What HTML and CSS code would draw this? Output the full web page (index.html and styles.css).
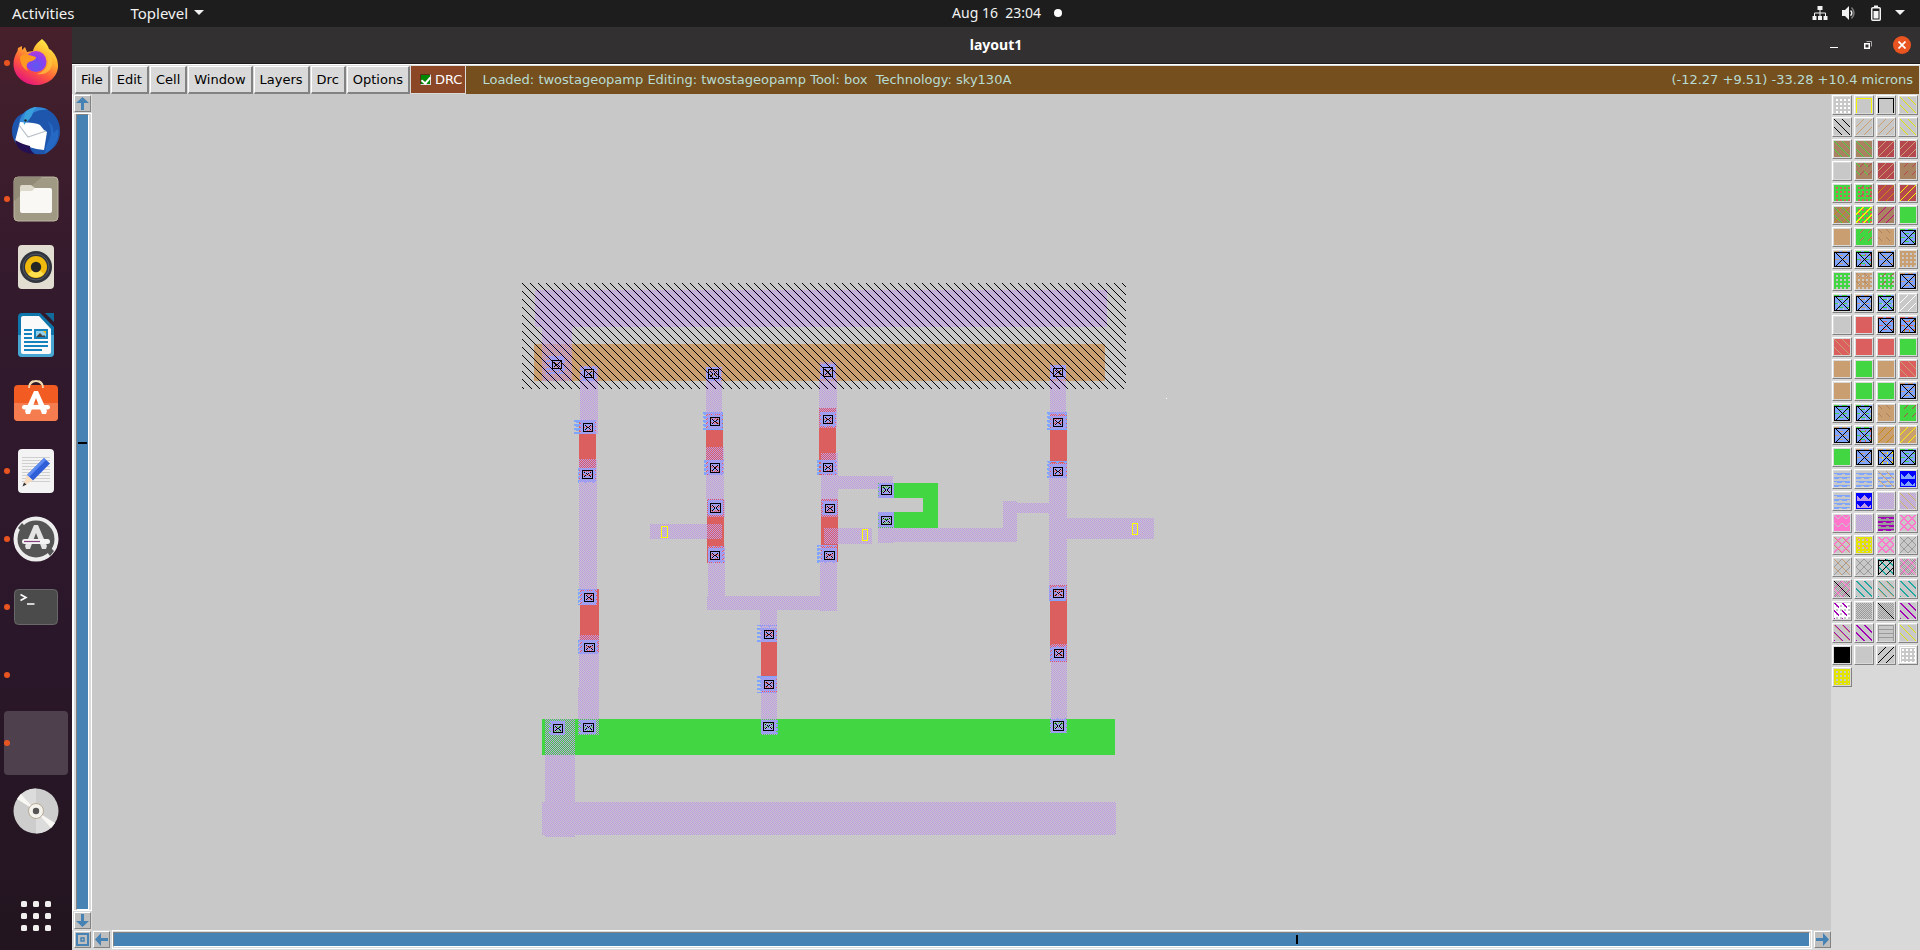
FILE: index.html
```html
<!DOCTYPE html>
<html lang="en">
<head>
<meta charset="utf-8">
<title>layout1</title>
<link rel="stylesheet" href="styles.css">
</head>
<body>
<header class="topbar">
  <div class="topbar-left">
    <button class="top-item" type="button">Activities</button>
    <button class="top-item app-menu" type="button">Toplevel
      <svg width="10" height="5" viewBox="0 0 10 5" aria-hidden="true"><path d="M0 0h10L5 5z" fill="#f2f2f2"/></svg>
    </button>
  </div>
  <button class="top-item clock" type="button"><span>Aug 16&nbsp; 23:04</span><span class="clock-dot"></span></button>
  <button class="top-item tray" type="button" aria-label="System menu">
    <svg width="16" height="16" viewBox="0 0 16 16" aria-hidden="true"><path d="M5.500 1h5v4h-5zM.5 11h4v4h-4zM6 11h4v4H6zM11.500 11h4v4h-4z" fill="#f2f2f2"/><path d="M8 5v6M2.500 11V8h11v3" fill="none" stroke="#f2f2f2"/></svg>
    <svg width="16" height="16" viewBox="0 0 16 16" aria-hidden="true"><path d="M1 5h3l4-4v14l-4-4H1z" fill="#f2f2f2"/><path d="M9.500 5.500a3 3 0 0 1 0 5" fill="none" stroke="#f2f2f2" stroke-width="1.500"/><path d="M10.500 2.500q5 5.500 0 11" fill="none" stroke="#777" stroke-width="1.500"/></svg>
    <svg width="12" height="16" viewBox="0 0 12 16" aria-hidden="true"><path d="M4 .5h4V3H4z" fill="#f2f2f2"/><rect x="1.750" y="2.750" width="8.500" height="12.500" rx="1" fill="none" stroke="#f2f2f2" stroke-width="1.500"/><path d="M3.500 6h5v7.500h-5z" fill="#f2f2f2"/></svg>
    <svg width="10" height="5" viewBox="0 0 10 5" aria-hidden="true"><path d="M0 0h10L5 5z" fill="#f2f2f2"/></svg>
  </button>
</header>

<div class="desktop">
  <nav class="dock" aria-label="Dock">
    <button class="dock-item running" type="button" aria-label="Firefox">
      <svg width="48" height="48" viewBox="0 0 48 48" aria-hidden="true">
        <defs>
          <linearGradient id="ffBody" x1=".85" y1=".05" x2=".3" y2="1"><stop offset="0" stop-color="#fff04a"/><stop offset=".35" stop-color="#ffb02e"/><stop offset=".65" stop-color="#ff5a3c"/><stop offset="1" stop-color="#e3127f"/></linearGradient>
          <radialGradient id="ffGlobe" cx=".5" cy=".7" r=".7"><stop offset="0" stop-color="#5a5af0"/><stop offset=".6" stop-color="#8a3ff0"/><stop offset="1" stop-color="#b63ad8"/></radialGradient>
        </defs>
        <path d="M30 0c4 3 6 7 7 10l2 1c5 5 7 10 7 16 0 11-10 19-22 19S1.500 37 1.500 25c0-5 1.500-9 4-13L6 9l4-2v4l3-3 2 5 6-1c1-5 5-9 9-12z" fill="url(#ffBody)"/>
        <circle cx="24" cy="22.500" r="10.500" fill="url(#ffGlobe)"/>
        <path d="M8 18c2-3 6-3 9-2l7 2c0 3-4 4-7 5-3 2-3 6-1 9-5-2-8-8-8-14z" fill="#ff9820"/>
        <path d="M33 12c6 8 3 20-8 23 9 2 17-5 15-15-1-4-3-7-7-8z" fill="#ffc43b" opacity=".75"/>
      </svg>
    </button>
    <button class="dock-item" type="button" aria-label="Thunderbird">
      <svg width="48" height="48" viewBox="0 0 48 48" aria-hidden="true">
        <path d="M12 6C18-1 30-1 36 3c8 4 12 12 12 21 0 10-5 18-13 21l-2 2c-7 1-16 0-21-4C4 39 0 32 0 24 0 15 5 8 12 6z" fill="#1f56ad"/>
        <path d="M12 6C18-1 30-1 36 3c-9-1-16 2-18 7l-9 14c-3-6-2-13 3-18z" fill="#3289d8"/>
        <path d="M8 15c6 1 15 0 20 3l4 5 3 2-3 18c-10-1-20-4-29-9z" fill="#fff"/>
        <path d="M7 18l9 12 18-6" fill="none" stroke="#b9bfc8" stroke-width="1.200"/>
        <path d="M14 5c3-3 7-5 11-5l-4 4c0 6-6 10-9 14-1-4 0-9 2-13z" fill="#3aa0dc"/>
        <path d="M36 15c5 8 3 16-2 24l-1 8c9-5 15-15 13-25l-5 4c1-5-1-9-5-11z" fill="#2569c4"/>
        <path d="M3 33c5 3 10 5 15 6 0 4 2 6 5 8C12 47 5 42 3 33z" fill="#241052"/>
        <circle cx="13.500" cy="13.500" r="1.200" fill="#222"/>
      </svg>
    </button>
    <button class="dock-item running" type="button" aria-label="Files">
      <svg width="48" height="48" viewBox="0 0 48 48" aria-hidden="true"><rect x="2" y="2" width="44" height="44" rx="4" fill="#a09a84" stroke="#bdb7a2"/><path d="M2 26L30 2h-24q-4 0-4 4z" fill="#918a76"/><path d="M8 12q0-2 2-2h9l4 3v8H8z" fill="#dedacb"/><path d="M8 18q0-2 2-2h10l3-3h15q2 0 2 2v21q0 2-2 2H10q-2 0-2-2z" fill="#f9f8f5"/></svg>
    </button>
    <button class="dock-item" type="button" aria-label="Rhythmbox">
      <svg width="48" height="48" viewBox="0 0 48 48" aria-hidden="true"><rect x="6" y="2" width="36" height="44" rx="4" fill="#e2ddd1"/><circle cx="24" cy="24" r="16" fill="#30343c"/><circle cx="24" cy="24" r="13" fill="none" stroke="#555a66"/><circle cx="24" cy="24" r="11" fill="#efb90d"/><path d="M16 31a11 11 0 0 0 16 0l-8-7z" fill="#ffe04d"/><circle cx="24" cy="24" r="5.200" fill="#252525"/></svg>
    </button>
    <button class="dock-item" type="button" aria-label="LibreOffice Writer">
      <svg width="48" height="48" viewBox="0 0 48 48" aria-hidden="true"><path d="M10 2h18l14 14v26q0 4-4 4H10q-4 0-4-4V6q0-4 4-4z" fill="#0f76ac"/><path d="M6 24h36v18q0 4-4 4H10q-4 0-4-4z" fill="#48a7d2"/><path d="M11 5h16l12 13v23q0 2-2 2H11q-2 0-2-2V7q0-2 2-2z" fill="#fafafa"/><path d="M33 2h9v9z" fill="#126a9a"/><path d="M12 19h8M12 23h8M12 27h8M12 31h24M12 35h24M12 39h18" stroke="#1382bd" stroke-width="2"/><rect x="22" y="18" width="14" height="10" fill="#1382bd"/><path d="M24 20h10v6H24z" fill="#8fd1ed"/><path d="M24 26l4-4 3 3 1-1 2 2z" fill="#444"/><path d="M31 20h3v3z" fill="#f1b71a"/></svg>
    </button>
    <button class="dock-item" type="button" aria-label="Ubuntu Software">
      <svg width="48" height="48" viewBox="0 0 48 48" aria-hidden="true"><path d="M17 9a7 7 0 0 1 14 0" fill="none" stroke="#f3dbb0" stroke-width="1.800"/><rect x="2" y="6" width="44" height="36" rx="4" fill="#f25c22"/><path d="M2 24h44v14q0 4-4 4H6q-4 0-4-4z" fill="#f47c4e"/><path d="M17 9q0-5 4-7M31 9q0-5-4-7" fill="none" stroke="#f3dbb0" stroke-width="1.800"/><path d="M22 12h4l9 20-1 3h-4l-6-16-6 16h-4l-1-3z" fill="#fff"/><rect x="10" y="26" width="28" height="4.500" rx="2.200" fill="#fff"/></svg>
    </button>
    <button class="dock-item running" type="button" aria-label="Text Editor">
      <svg width="48" height="48" viewBox="0 0 48 48" aria-hidden="true"><rect x="6" y="2" width="36" height="44" rx="4" fill="#f3f3f3"/><path d="M10 10.500h28M10 13.500h28M10 16.500h28M10 19.500h28M10 22.500h28M10 25.500h28M10 28.500h28M10 31.500h28M10 34.500h28" stroke="#cfcfcf"/><path d="M32 11l6 5.500-17 17-6-5.500z" fill="#2f5fd8"/><path d="M32 11l2 2-17 17-2-2z" fill="#5c8af0"/><path d="M15 28l6 5.500-10 5.500z" fill="#f8dcc0"/><path d="M12 35.500l2.500 2L10.500 39.500z" fill="#333"/></svg>
    </button>
    <button class="dock-item running" type="button" aria-label="Software Updater">
      <svg width="48" height="48" viewBox="0 0 48 48" aria-hidden="true"><circle cx="24" cy="24" r="20.500" fill="#555" stroke="#ededed" stroke-width="4"/><path d="M6 13l4-5 3 3-4 5zM35 37l4-4 3 3-4 5z" fill="#555"/><path d="M22 10h4l9 21-1 3h-4l-6-16-6 16h-4l-1-3z" fill="#e4e4e4"/><rect x="10" y="24" width="28" height="5" rx="2.500" fill="#f3f3f3"/><path d="M12 26.500h16" stroke="#87407f" stroke-width="1.200"/></svg>
    </button>
    <button class="dock-item running" type="button" aria-label="Terminal">
      <svg width="48" height="48" viewBox="0 0 48 48" aria-hidden="true"><rect x="2.500" y="6.500" width="43" height="35" rx="4" fill="#4b4b4b" stroke="#686868"/><path d="M8.500 11.500l5.500 3-5.500 3M15 21h7.500" fill="none" stroke="#fff" stroke-width="1.600"/></svg>
    </button>
    <button class="dock-item running" type="button" aria-label="Console window"></button>
    <button class="dock-item running active" type="button" aria-label="Layout window"></button>
    <button class="dock-item" type="button" aria-label="Disc">
      <svg width="48" height="48" viewBox="0 0 48 48" aria-hidden="true"><circle cx="24" cy="24" r="22.500" fill="#cdcdcd"/><path d="M24 24V1.500A22.500 22.500 0 0 0 6 10.500z" fill="#dcdcdc"/><path d="M24 24V46.500A22.500 22.500 0 0 0 42 37.500z" fill="#dcdcdc"/><path d="M24 24L5 12l4-5zM24 24l19 12-4 5z" fill="#f8f7f4"/><circle cx="24" cy="24" r="7.500" fill="#f5f3ee" stroke="#b5ab96"/><circle cx="24" cy="24" r="3.200" fill="#555"/></svg>
    </button>
    <button class="dock-item apps" type="button" aria-label="Show Applications">
      <svg width="30" height="30" viewBox="0 0 30 30" fill="#f2f0ee" aria-hidden="true"><rect width="6" height="6" rx="1.500"/><rect x="12" width="6" height="6" rx="1.500"/><rect x="24" width="6" height="6" rx="1.500"/><rect y="12" width="6" height="6" rx="1.500"/><rect x="12" y="12" width="6" height="6" rx="1.500"/><rect x="24" y="12" width="6" height="6" rx="1.500"/><rect y="24" width="6" height="6" rx="1.500"/><rect x="12" y="24" width="6" height="6" rx="1.500"/><rect x="24" y="24" width="6" height="6" rx="1.500"/></svg>
    </button>
  </nav>

  <main class="window">
    <div class="titlebar">
      <h1 class="title">layout1</h1>
      <div class="window-controls">
        <button type="button" aria-label="Minimize"><svg width="8" height="8" viewBox="0 0 8 8"><path d="M0 6.500h8" stroke="#fff"/></svg></button>
        <button type="button" aria-label="Restore"><svg width="8" height="8" viewBox="0 0 8 8"><path d="M.75 2.750h4.500v4.500H.75z" fill="none" stroke="#fff" stroke-width="1.500"/><path d="M2.500.5h5v5" fill="none" stroke="#aaa"/></svg></button>
        <button type="button" class="close" aria-label="Close"><svg width="8" height="8" viewBox="0 0 8 8"><path d="M.5.5l7 7M7.500.5l-7 7" stroke="#fff" stroke-width="1.700"/></svg></button>
      </div>
    </div>

    <div class="menubar">
      <button class="menu-button" type="button">File</button>
      <button class="menu-button" type="button">Edit</button>
      <button class="menu-button" type="button">Cell</button>
      <button class="menu-button" type="button">Window</button>
      <button class="menu-button" type="button">Layers</button>
      <button class="menu-button" type="button">Drc</button>
      <button class="menu-button" type="button">Options</button>
      <label class="drc"><input type="checkbox" checked>DRC</label>
      <div class="status"><span>Loaded: twostageopamp Editing: twostageopamp Tool: box&nbsp; Technology: sky130A</span><span>(-12.27 +9.51) -33.28 +10.4 microns</span></div>
    </div>

    <div class="workspace">
      <div class="vscroll">
        <button class="arrow" type="button" aria-label="Scroll up"><svg width="13" height="13" viewBox="0 0 13 13"><path d="M6.500 0L13 6H8v7H5V6H0z" fill="#4682b4"/></svg></button>
        <div class="trough"><div class="thumb"><span class="mark"></span></div></div>
        <button class="arrow" type="button" aria-label="Scroll down"><svg width="13" height="13" viewBox="0 0 13 13"><path d="M6.500 13L0 7h5V0h3v7h5z" fill="#4682b4"/></svg></button>
      </div>
      <div class="canvas">
        <svg class="layout" id="layout" role="img" aria-label="Two stage op-amp layout" shape-rendering="crispEdges"></svg>
      </div>
      <div class="hscroll">
        <button class="arrow" type="button" aria-label="Zoom to fit"><svg width="13" height="13" viewBox="0 0 13 13"><path d="M1 1h11v11H1z" fill="none" stroke="#4682b4" stroke-width="2"/><path d="M5 5h3v3H5z" fill="#bebebe" stroke="#4682b4" stroke-width="1.500"/></svg></button>
        <button class="arrow" type="button" aria-label="Scroll left"><svg width="13" height="13" viewBox="0 0 13 13"><path d="M0 6.500L6 0v5h7v3H6v5z" fill="#4682b4"/></svg></button>
        <div class="trough"><div class="thumb"><span class="mark"></span></div></div>
        <button class="arrow" type="button" aria-label="Scroll right"><svg width="13" height="13" viewBox="0 0 13 13"><path d="M13 6.500L7 13V8H0V5h7V0z" fill="#4682b4"/></svg></button>
      </div>
      <aside class="palette" id="palette" aria-label="Layers"></aside>
    </div>
  </main>
</div>
<script src="app.js"></script>
</body>
</html>
```

FILE: styles.css
```css
* { box-sizing: border-box; }

body {
  margin: 0;
  height: 100vh;
  display: flex;
  flex-direction: column;
  overflow: hidden;
  background: #c8c8c8;
  font-family: "Noto Sans", "Open Sans", sans-serif;
  font-size: 14px;
}

button {
  margin: 0;
  padding: 0;
  border: 0;
  background: none;
  font: inherit;
  color: inherit;
}

svg { display: block; }

/* Desktop top bar */
.topbar {
  display: grid;
  grid-template-columns: 1fr auto 1fr;
  align-items: center;
  height: 27px;
  flex: none;
  padding: 0 12px 2px;
  background: #1d1d1d;
  color: #f2f2f2;
}
.topbar-left { display: flex; gap: 56px; font-size: 15px; }
.top-item { display: flex; align-items: center; gap: 6px; line-height: 24px; white-space: nowrap; }
.clock { gap: 13px; padding-left: 94px; }
.clock-dot { width: 8px; height: 8px; border-radius: 50%; background: #fff; }
.tray { justify-self: end; gap: 13px; padding-right: 3px; }

.desktop { flex: 1; min-height: 0; display: flex; }

/* Dock */
.dock {
  flex: none;
  width: 72px;
  display: flex;
  flex-direction: column;
  gap: 4px;
  padding: 4px 4px 2px;
  background: linear-gradient(#46202b, #331a2d 28%, #2b172a 65%, #22151f);
}
.dock-item {
  position: relative;
  flex: none;
  height: 64px;
  display: flex;
  align-items: center;
  justify-content: center;
  border-radius: 4px;
}
.dock-item.active { background: #4e404c; }
.running::before {
  content: "";
  position: absolute;
  left: 0;
  top: 29px;
  width: 6px;
  height: 6px;
  border-radius: 50%;
  background: #e95420;
}
.dock-item.apps { margin-top: auto; }

/* Window frame */
.window { flex: 1; min-width: 0; display: flex; flex-direction: column; }
.titlebar {
  height: 37px;
  flex: none;
  display: grid;
  grid-template-columns: 1fr auto 1fr;
  align-items: center;
  padding: 0 9px;
  background: #323031;
  border-bottom: 1px solid #1b1a1a;
  color: #fff;
}
.title { grid-column: 2; margin: 0; font-size: 14px; line-height: 20px; }
.window-controls { justify-self: end; display: flex; gap: 16px; }
.window-controls button {
  width: 18px;
  height: 18px;
  display: flex;
  align-items: center;
  justify-content: center;
  border-radius: 50%;
}
.window-controls .close { background: #e95420; }

/* Menu bar */
.menubar {
  flex: none;
  display: flex;
  height: 30px;
  padding: 1px 1px 0 3px;
  background: #d9d9d9;
  border-top: 1px solid #fff;
  color: #000;
  font-family: "DejaVu Sans", sans-serif;
  font-size: 13px;
}
.menu-button {
  margin: 0 1px 0 0;
  padding: 0 5px;
  border: 1px solid;
  border-color: #fff #828282 #828282 #fff;
  border-right-width: 2px;
  border-bottom-width: 2px;
  background: #d9d9d9;
  line-height: 24px;
}
.drc {
  display: flex;
  align-items: center;
  gap: 4px;
  padding: 0 3px 0 9px;
  border: 1px solid #d9d9d9;
  border-top: 0;
  border-left: 0;
  background: #8b4726;
  color: #fff;
}
.drc input {
  appearance: none;
  margin: 0;
  width: 11px;
  height: 11px;
  border: 1px solid;
  border-color: #5c3018 #d9d9d9 #d9d9d9 #5c3018;
  background: #008800;
  display: grid;
}
.drc input:checked::before {
  content: "";
  width: 4px;
  height: 7px;
  margin: 0 0 0 2px;
  border: solid #fff;
  border-width: 0 2px 2px 0;
  transform: rotate(40deg);
}
.status {
  flex: 1;
  display: flex;
  align-items: center;
  justify-content: space-between;
  padding: 0 6px 1px 16px;
  background: #75501e;
  color: #b8dcd4;
  white-space: nowrap;
}

/* Drawing area */
.workspace {
  flex: 1;
  min-height: 0;
  display: grid;
  grid-template: 1fr 20px / 20px 1fr 89px;
  background: #d9d9d9;
}
.canvas { min-width: 0; min-height: 0; background: #c8c8c8; }
.layout { width: 100%; height: 100%; }

.vscroll {
  display: flex;
  flex-direction: column;
  align-items: center;
  gap: 1px;
  padding: 1px 0;
  border-left: 1px solid #fff;
}
.hscroll {
  grid-column: 1 / 3;
  display: flex;
  align-items: flex-start;
  gap: 2px;
  padding-left: 2px;
}
.arrow {
  width: 17px;
  height: 17px;
  flex: none;
  padding: 1px;
  border: 1px solid;
  border-color: #fff #828282 #828282 #fff;
  background: #bebebe;
}
.hscroll .arrow { margin-top: 1px; }
.trough { flex: 1; border: 1px solid #fff; }
.vscroll .trough { width: 19px; padding: 0 2px 0 2px; }
.hscroll .trough { height: 19px; padding: 1px 1px 1px 0; }
.thumb {
  width: 100%;
  height: 100%;
  display: flex;
  align-items: center;
  justify-content: center;
  border: 1px solid;
  border-color: #828282 #fff #fff #828282;
  background: #4682b4;
}
.mark { background: #000; }
.vscroll .thumb { align-items: flex-start; }
.vscroll .mark { width: 9px; height: 2px; margin-top: 327px; }
.hscroll .thumb { justify-content: flex-start; }
.hscroll .mark { width: 2px; height: 9px; margin-left: 69.750%; }

/* Layer palette */
.palette {
  grid-column: 3;
  grid-row: 1 / 3;
  display: grid;
  grid-template-columns: repeat(4, 20px);
  grid-auto-rows: 20px;
  gap: 2px;
  padding: 1px;
  align-content: start;
}
.swatch {
  padding: 1px;
  border: 1px solid;
  border-color: #fff #828282 #828282 #fff;
  background: #d9d9d9;
}
.swatch svg { background: #c8c8c8; }
```

FILE: app.js
```js
const C = {
  grey: "#c8c8c8", white: "#ffffff", black: "#000000", yellow: "#f5f500", gold: "#e3e300",
  tan: "#c99e70", brown: "#a98262", dred: "#b5484f", red: "#dc5f5f", green: "#42d742",
  orange: "#c98a10", magenta: "#c0007c", blue: "#80a5ff", deep: "#0000ff",
  lilac: "#be98e4", purple: "#a400b8", pink: "#ff76cc", mid: "#9a9a9a", teal: "#22a8a0"
};

/* ---- Layer palette: every swatch is a 16x16 stipple ---- */
const mod = (a, b) => ((a % b) + b) % b;
const stipple = {
  all: () => true,
  back: (x, y) => mod(x - y, 8) === 0,
  back2: (x, y) => mod(x - y, 8) < 2,
  fwd: (x, y) => mod(x + y, 8) === 7,
  fwd2: (x, y) => mod(x + y, 8) > 5,
  backDash: (x, y) => mod(x - y, 8) === 0 && mod(x, 8) < 4,
  fwdDash: (x, y) => mod(x + y, 8) === 7 && mod(x, 8) > 3,
  backThick: (x, y) => mod(x - y, 8) < 2 && mod(x, 8) < 5,
  dots: (x, y) => mod(x, 4) > 1 && mod(y, 4) > 1,
  specks: (x, y) => mod(x, 5) > 3 && mod(y, 5) > 2,
  frame: (x, y) => x < 1 || y < 1 || x > 14 || y > 14,
  box: (x, y) => y > 0 && (y === 1 || x === 0 || x === 15),
  bands: (x, y) => mod(y, 4) > 1 && !(mod(y, 8) === 3 && mod(x, 8) < 3) && !(mod(y, 8) === 7 && mod(x, 8) > 4),
  dashes: (x, y) => mod(y, 4) === 0 && mod(x + (mod(y, 8) ? 4 : 0), 8) < 5,
  checker: (x, y) => mod(x + y, 2) === 0,
  mesh: (x, y) => mod(x - y, 8) === 0 || mod(x + y, 8) === 7,
  mesh2: (x, y) => mod(x - y, 8) < 2 || mod(x + y, 8) > 5,
  waves: (x, y) => x === 0 || x === 15 || y === 15 || mod(y, 8) < 2 || Math.abs(mod(x, 8) - 4) + mod(y, 8) < 6,
  lines: (x, y) => mod(y, 4) === 0 || x === 0 || x === 15,
  cross: (x, y) => y > 0 && (y === 1 || y === 15 || x === 0 || x === 15 || x === y || x === 16 - y),
  slash: (x, y) => x === y
};

const flat = c => [[c, "all"]];
const on = (base, ...ops) => [[base, "all"], ...ops];
const contact = (c, extra) => [[C.blue, "all"], [c, "dashes"], ...(extra ? [[extra, "specks"]] : []), [C.black, "cross"]];
const G = C.grey;

const swatches = [
  on(G, [C.white, "dots"]), on(G, [C.yellow, "box"]), on(G, [C.black, "box"]), on(G, [C.gold, "back"]),
  on(G, [C.black, "back"]), on(G, [C.tan, "fwd"]), on(G, [C.tan, "fwd"]), on(G, [C.gold, "back"]),
  on(C.brown, [C.green, "back"]), on(C.brown, [C.green, "back"]), on(C.dred, [C.tan, "fwd"]), on(C.dred, [C.tan, "fwd"]),
  flat(G), on(C.brown, [C.green, "backDash"], [C.dred, "fwdDash"]), on(C.dred, [C.tan, "fwd"]), on(C.brown, [C.dred, "fwdDash"]),
  on(C.green, [C.red, "dots"]), on(C.green, [C.red, "dots"], [C.dred, "fwdDash"]), on(C.dred, [C.orange, "fwd"]), on(C.dred, [C.yellow, "fwd"]),
  on(C.brown, [C.orange, "fwd"], [C.green, "back"]), on(C.green, [C.red, "dots"], [C.yellow, "fwd2"]), on(C.brown, [C.magenta, "fwd"]), flat(C.green),
  flat(C.tan), on(C.green, [C.red, "fwdDash"]), on(C.tan, [C.brown, "backDash"]), contact(C.green),
  contact(C.tan), contact(C.green, C.red), contact(C.tan), on(C.tan, [G, "dots"]),
  on(C.green, [G, "dots"]), on(C.tan, [G, "dots"], [C.brown, "backDash"]), on(C.green, [G, "dots"], [C.dred, "fwdDash"]), contact(C.tan),
  contact(C.green, G), contact(C.tan, G), contact(C.green, G), on(G, [C.white, "fwd"]),
  flat(G), flat(C.red), contact(C.red), contact(C.red, C.orange),
  on(C.red, [C.tan, "back"]), flat(C.red), flat(C.red), flat(C.green),
  flat(C.tan), flat(C.green), flat(C.tan), on(C.red, [C.tan, "back"]),
  flat(C.tan), flat(C.green), flat(C.green), contact(C.tan),
  contact(C.green), contact(C.green, G), on(C.tan, [C.brown, "backDash"]), on(C.green, [C.dred, "fwdDash"]),
  contact(C.tan), contact(C.green, C.red), on(C.tan, [C.orange, "fwd"]), on(C.tan, [C.yellow, "fwd"]),
  flat(C.green), contact(C.tan), contact(C.tan, C.yellow), contact(C.green),
  on(G, [C.blue, "bands"]), on(G, [C.blue, "bands"]), on(G, [C.blue, "bands"], [C.tan, "back"]), on(C.blue, [C.deep, "waves"]),
  on(G, [C.blue, "bands"]), on(C.lilac, [C.deep, "waves"]), on(G, [C.lilac, "checker"]), on(G, [C.lilac, "checker"], [C.tan, "back"]),
  on(C.pink, [G, "fwdDash"], [G, "backDash"]), on(G, [C.lilac, "checker"]), on(C.mid, [C.purple, "bands"]), on(G, [C.pink, "mesh2"]),
  on(G, [C.pink, "mesh2"], [C.tan, "back"]), on(C.gold, [G, "dots"], [C.pink, "backDash"], [C.gold, "frame"]), on(G, [C.pink, "mesh2"]), on(G, [C.mid, "mesh"]),
  on(G, [C.mid, "mesh"], [C.tan, "back"]), on(G, [C.mid, "mesh"]), on(G, [C.teal, "back2"], [C.black, "fwd"], [C.black, "box"]), on(G, [C.mid, "checker"], [C.pink, "mesh"]),
  on(G, [C.mid, "checker"], [C.pink, "mesh"], [C.black, "slash"]), on(G, [C.teal, "back2"]), on(G, [C.teal, "back2"], [C.tan, "back"]), on(G, [C.teal, "back2"]),
  on(C.white, [G, "dots"], [C.purple, "backThick"]), on(G, [C.mid, "checker"]), on(G, [C.mid, "checker"], [C.black, "slash"]), on(G, [C.purple, "back2"]),
  on(G, [C.purple, "back2"], [C.tan, "back"]), on(G, [C.purple, "back2"]), on(G, [C.mid, "lines"]), on(G, [C.gold, "back"]),
  flat(C.black), flat(G), on(G, [C.black, "fwd"]), on(G, [C.white, "dots"], [C.white, "frame"]),
  on(C.gold, [G, "dots"], [C.gold, "frame"])
];

function pixels(ops) {
  let out = "";
  for (let y = 0; y < 16; y++) {
    const row = [];
    for (let x = 0; x < 16; x++) {
      let color = G;
      for (const [c, name] of ops) if (stipple[name](x, y)) color = c;
      row.push(color);
    }
    for (let x = 0; x < 16;) {
      let end = x + 1;
      while (end < 16 && row[end] === row[x]) end++;
      out += `<rect x="${x}" y="${y}" width="${end - x}" height="1" fill="${row[x]}"/>`;
      x = end;
    }
  }
  return out;
}

const palette = document.getElementById("palette");
swatches.forEach((ops, i) => {
  const button = document.createElement("button");
  button.type = "button";
  button.className = "swatch";
  button.setAttribute("aria-label", `Layer ${i + 1}`);
  button.innerHTML = `<svg width="16" height="16" viewBox="0 0 16 16" shape-rendering="crispEdges">${pixels(ops)}</svg>`;
  palette.append(button);
});

/* ---- Cell layout, rectangles as [x, y, width, height] ---- */
const tan = [[534, 344, 571, 37]];
const green = [[542, 719, 573, 36], [878, 483, 60, 15], [923, 498, 15, 14], [878, 512, 60, 16]];
const red = [
  [579, 420, 17, 62], [580, 589, 19, 64], [706, 412, 17, 63], [707, 499, 17, 64], [819, 408, 17, 67],
  [821, 499, 17, 63], [1050, 412, 17, 66], [1050, 585, 17, 77], [761, 628, 16, 65]
];
const metal = [
  [535, 290, 572, 37], [542, 327, 30, 54],
  [580, 366, 18, 68], [579, 459, 18, 130], [580, 589, 17, 16], [579, 635, 20, 52], [578, 687, 21, 48],
  [545, 719, 30, 118], [542, 802, 574, 33],
  [706, 367, 16, 62], [706, 447, 18, 52], [707, 499, 18, 18], [708, 546, 17, 50], [650, 524, 72, 15],
  [707, 596, 113, 14], [820, 362, 16, 16], [819, 378, 18, 50], [821, 453, 17, 64], [824, 528, 48, 16],
  [820, 545, 17, 66], [838, 476, 55, 13], [878, 483, 16, 15], [878, 512, 16, 31], [894, 528, 123, 14],
  [1003, 501, 14, 27], [1017, 503, 32, 10], [1050, 365, 16, 64], [1049, 463, 18, 137], [1067, 518, 87, 21],
  [1051, 644, 16, 75], [1050, 719, 17, 14], [760, 610, 17, 32], [761, 677, 16, 58]
];
/* pad rectangle followed by the contact cut rectangle */
const contacts = [
  [546, 356, 19, 18, 552, 360, 10, 9], [580, 366, 17, 15, 584, 369, 10, 9], [706, 367, 15, 14, 708, 369, 11, 10],
  [820, 364, 16, 14, 823, 367, 10, 10], [1050, 365, 16, 14, 1053, 368, 10, 9], [574, 419, 22, 15, 583, 423, 10, 9],
  [578, 467, 18, 16, 582, 470, 11, 9], [578, 589, 19, 16, 584, 593, 10, 9], [578, 639, 20, 15, 584, 643, 11, 9],
  [579, 720, 17, 14, 583, 723, 11, 9], [549, 721, 16, 14, 553, 724, 10, 9], [703, 412, 20, 18, 710, 417, 10, 9],
  [704, 459, 20, 16, 710, 463, 10, 10], [708, 500, 15, 15, 710, 503, 11, 10], [708, 546, 17, 17, 710, 551, 10, 9],
  [820, 411, 16, 16, 823, 415, 10, 9], [817, 460, 20, 15, 823, 463, 10, 9], [822, 501, 15, 14, 825, 504, 10, 9],
  [817, 545, 20, 18, 824, 551, 11, 9], [878, 483, 16, 15, 881, 485, 11, 10], [878, 512, 16, 16, 881, 516, 11, 9],
  [1047, 412, 20, 18, 1053, 418, 10, 9], [1047, 461, 20, 17, 1053, 467, 10, 9], [1049, 586, 17, 15, 1053, 589, 11, 9],
  [1050, 646, 16, 15, 1054, 649, 10, 9], [1050, 718, 17, 15, 1053, 721, 11, 10], [757, 625, 20, 17, 764, 630, 10, 9],
  [757, 675, 20, 18, 764, 680, 10, 9], [761, 720, 17, 14, 763, 722, 11, 9]
];
const labels = [[661, 526, 6, 11], [862, 529, 5, 11], [1132, 523, 5, 11]];

const rect = ([x, y, w, h], attrs) => `<rect x="${x}" y="${y}" width="${w}" height="${h}" ${attrs}/>`;
const layer = (list, fill) => list.map(r => rect(r, `fill="${fill}"`)).join("");

const pads = contacts.map(([px, py, pw, ph, x, y, w, h]) =>
  rect([px, py, pw, ph], 'fill="url(#padStipple)"') +
  rect([x - 1, y - 1, w + 2, h + 2], `fill="none" stroke="${C.blue}" stroke-width="2"`)).join("");

/* one black pixel per row on each diagonal, inside a one-pixel frame */
function cut([, , , , x, y, w, h]) {
  let d = "";
  for (let j = 2; j < h - 2; j++) {
    const i = Math.round(2 + (j - 2) * (w - 5) / (h - 5));
    d += `M${x + i} ${y + j}h1v1h-1zM${x + w - 1 - i} ${y + j}h1v1h-1z`;
  }
  return `<path d="M${x} ${y}h${w}v${h}h${-w}zM${x + 1} ${y + 1}v${h - 2}h${w - 2}v${2 - h}z" fill-rule="evenodd"/><path d="${d}"/>`;
}

document.getElementById("layout").innerHTML = `
<defs>
  <pattern id="metalStipple" width="2" height="2" patternUnits="userSpaceOnUse"><path d="M0 0h1v1H0zM1 1h1v1H1z" fill="${C.lilac}"/></pattern>
  <pattern id="padStipple" width="8" height="4" patternUnits="userSpaceOnUse"><path d="M0 0h8v2H0zM0 2h3v1H0z" fill="${C.blue}"/></pattern>
  <pattern id="boxHatch" x="522" y="283" width="8" height="8" patternUnits="userSpaceOnUse"><path d="M0 0h1v1H0zM1 1h1v1H1zM2 2h1v1H2zM3 3h1v1H3zM4 4h1v1H4zM5 5h1v1H5zM6 6h1v1H6zM7 7h1v1H7z"/></pattern>
</defs>
<g transform="translate(-92 -94)">
  ${layer(tan, C.tan)}${layer(green, C.green)}${layer(red, C.red)}
  ${pads}
  ${layer(metal, "url(#metalStipple)")}
  <rect x="522" y="283" width="604" height="106" fill="url(#boxHatch)"/>
  ${contacts.map(cut).join("")}
  ${labels.map(([x, y, w, h]) => rect([x + 0.5, y + 0.5, w, h], 'fill="none" stroke="#ffff00"')).join("")}
  <rect x="1166" y="398" width="1" height="1" fill="#fff"/>
</g>`;
```
